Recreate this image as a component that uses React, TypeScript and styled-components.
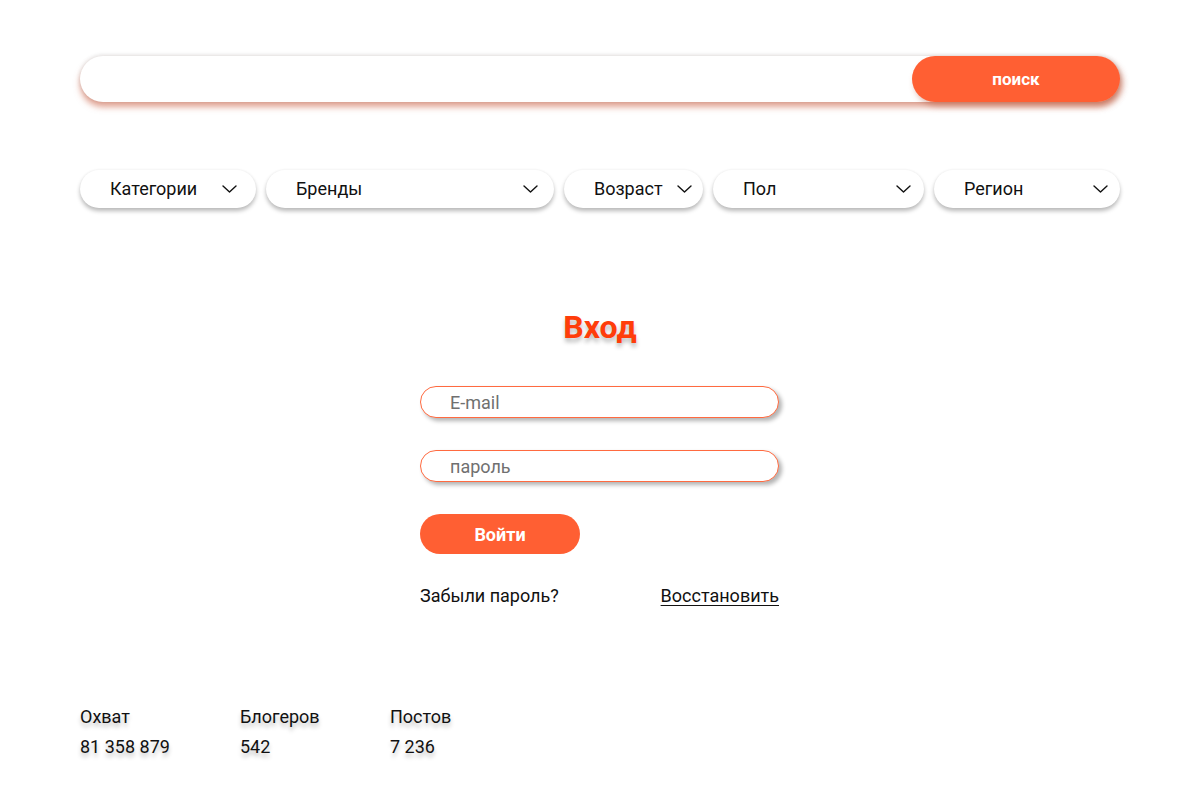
import React from "react";
import styled, { createGlobalStyle } from "styled-components";

const GlobalStyle = createGlobalStyle`
  * { box-sizing: border-box; }
  html, body { margin: 0; padding: 0; background: #ffffff; }
  body { font-family: Roboto, "Liberation Sans", sans-serif; color: #111111; }
`;

const Page = styled.div`
  width: 1200px;
  min-height: 787px;
  padding: 56px 80px 0 80px;
  display: flex;
  flex-direction: column;
`;

const SearchBar = styled.div`
  height: 46px;
  border-radius: 23px;
  background: #ffffff;
  display: flex;
  justify-content: flex-end;
  box-shadow: 0 -1px 4px rgba(0, 0, 0, 0.12), 0 5px 6px rgba(200, 90, 60, 0.55);
`;

const SearchInput = styled.input`
  flex: 1;
  border: none;
  outline: none;
  background: transparent;
  padding: 0 24px;
  font: inherit;
  font-size: 18px;
`;

const SearchButton = styled.button`
  width: 208px;
  height: 46px;
  border: none;
  border-radius: 23px;
  background: #ff5f33;
  color: #ffffff;
  font-family: Roboto, "Liberation Sans", sans-serif;
  font-weight: 700;
  font-size: 17px;
  box-shadow: 3px 4px 6px rgba(180, 80, 50, 0.45);
  cursor: pointer;
`;

const Filters = styled.div`
  margin-top: 68px;
  display: flex;
  gap: 10px;
`;

const Dropdown = styled.div<{ $w: number; $pr: number }>`
  width: ${(p) => p.$w}px;
  height: 38px;
  border-radius: 19px;
  background: #ffffff;
  display: flex;
  align-items: center;
  justify-content: space-between;
  padding: 0 ${(p) => p.$pr}px 1px 30px;
  font-size: 18px;
  color: #111111;
  box-shadow: 0 3px 4px rgba(0, 0, 0, 0.28), 0 -1px 2px rgba(0, 0, 0, 0.03);
`;

const Chevron = styled.svg`
  width: 15px;
  height: 8px;
  flex-shrink: 0;
`;

const Title = styled.h1`
  margin: 103px 0 0 0;
  text-align: center;
  font-size: 32px;
  line-height: 33px;
  font-weight: 700;
  color: #ff3d0a;
  text-shadow: 0 4px 4px rgba(0, 0, 0, 0.25);
`;

const Form = styled.form`
  width: 360px;
  margin: 42px auto 0 auto;
  display: flex;
  flex-direction: column;
  gap: 32px;
`;

const Field = styled.input`
  width: 359px;
  height: 32px;
  border: 1px solid #ff6a40;
  border-radius: 16px;
  background: #ffffff;
  padding: 0 0 0 29px;
  font-family: Roboto, "Liberation Sans", sans-serif;
  font-size: 18px;
  color: #333333;
  outline: none;
  box-shadow: 3px 3px 4px rgba(0, 0, 0, 0.3);
  &::placeholder { color: #707070; }
`;

const LoginButton = styled.button`
  width: 160px;
  height: 40px;
  border: none;
  border-radius: 20px;
  background: #ff5f33;
  color: #ffffff;
  font-family: Roboto, "Liberation Sans", sans-serif;
  font-weight: 700;
  font-size: 18px;
  cursor: pointer;
`;

const ForgotRow = styled.div`
  width: 359px;
  display: flex;
  justify-content: space-between;
  align-items: center;
  font-size: 18px;
  line-height: 20px;
  color: #111111;
`;

const RestoreLink = styled.a`
  color: #111111;
  text-decoration: underline;
  text-underline-offset: 3px;
`;

const Stats = styled.div`
  margin-top: 101px;
  display: grid;
  grid-template-columns: 160px 150px 150px;
`;

const Stat = styled.div`
  display: flex;
  flex-direction: column;
  gap: 10px;
  font-size: 18px;
  line-height: 20px;
  color: #111111;
  text-shadow: 0 4px 4px rgba(0, 0, 0, 0.25);
`;

const ChevronIcon = () => (
  <Chevron viewBox="0 0 15 8" fill="none">
    <path d="M1 1L7.5 7L14 1" stroke="#111" strokeWidth="1.4" strokeLinecap="round" strokeLinejoin="round" />
  </Chevron>
);

const filters = [
  { label: "Категории", w: 176, pr: 19 },
  { label: "Бренды", w: 288, pr: 16 },
  { label: "Возраст", w: 139, pr: 11 },
  { label: "Пол", w: 211, pr: 13 },
  { label: "Регион", w: 186, pr: 12 },
];

const stats = [
  { label: "Охват", value: "81 358 879" },
  { label: "Блогеров", value: "542" },
  { label: "Постов", value: "7 236" },
];

export default function App() {
  return (
    <>
      <GlobalStyle />
      <Page>
        <SearchBar>
          <SearchInput aria-label="search" />
          <SearchButton>поиск</SearchButton>
        </SearchBar>
        <Filters>
          {filters.map((f) => (
            <Dropdown key={f.label} $w={f.w} $pr={f.pr}>
              <span>{f.label}</span>
              <ChevronIcon />
            </Dropdown>
          ))}
        </Filters>
        <Title>Вход</Title>
        <Form onSubmit={(e) => e.preventDefault()}>
          <Field placeholder="E-mail" />
          <Field placeholder="пароль" type="text" />
          <LoginButton type="submit">Войти</LoginButton>
          <ForgotRow>
            <span>Забыли пароль?</span>
            <RestoreLink href="#">Восстановить</RestoreLink>
          </ForgotRow>
        </Form>
        <Stats>
          {stats.map((s) => (
            <Stat key={s.label}>
              <span>{s.label}</span>
              <span>{s.value}</span>
            </Stat>
          ))}
        </Stats>
      </Page>
    </>
  );
}
